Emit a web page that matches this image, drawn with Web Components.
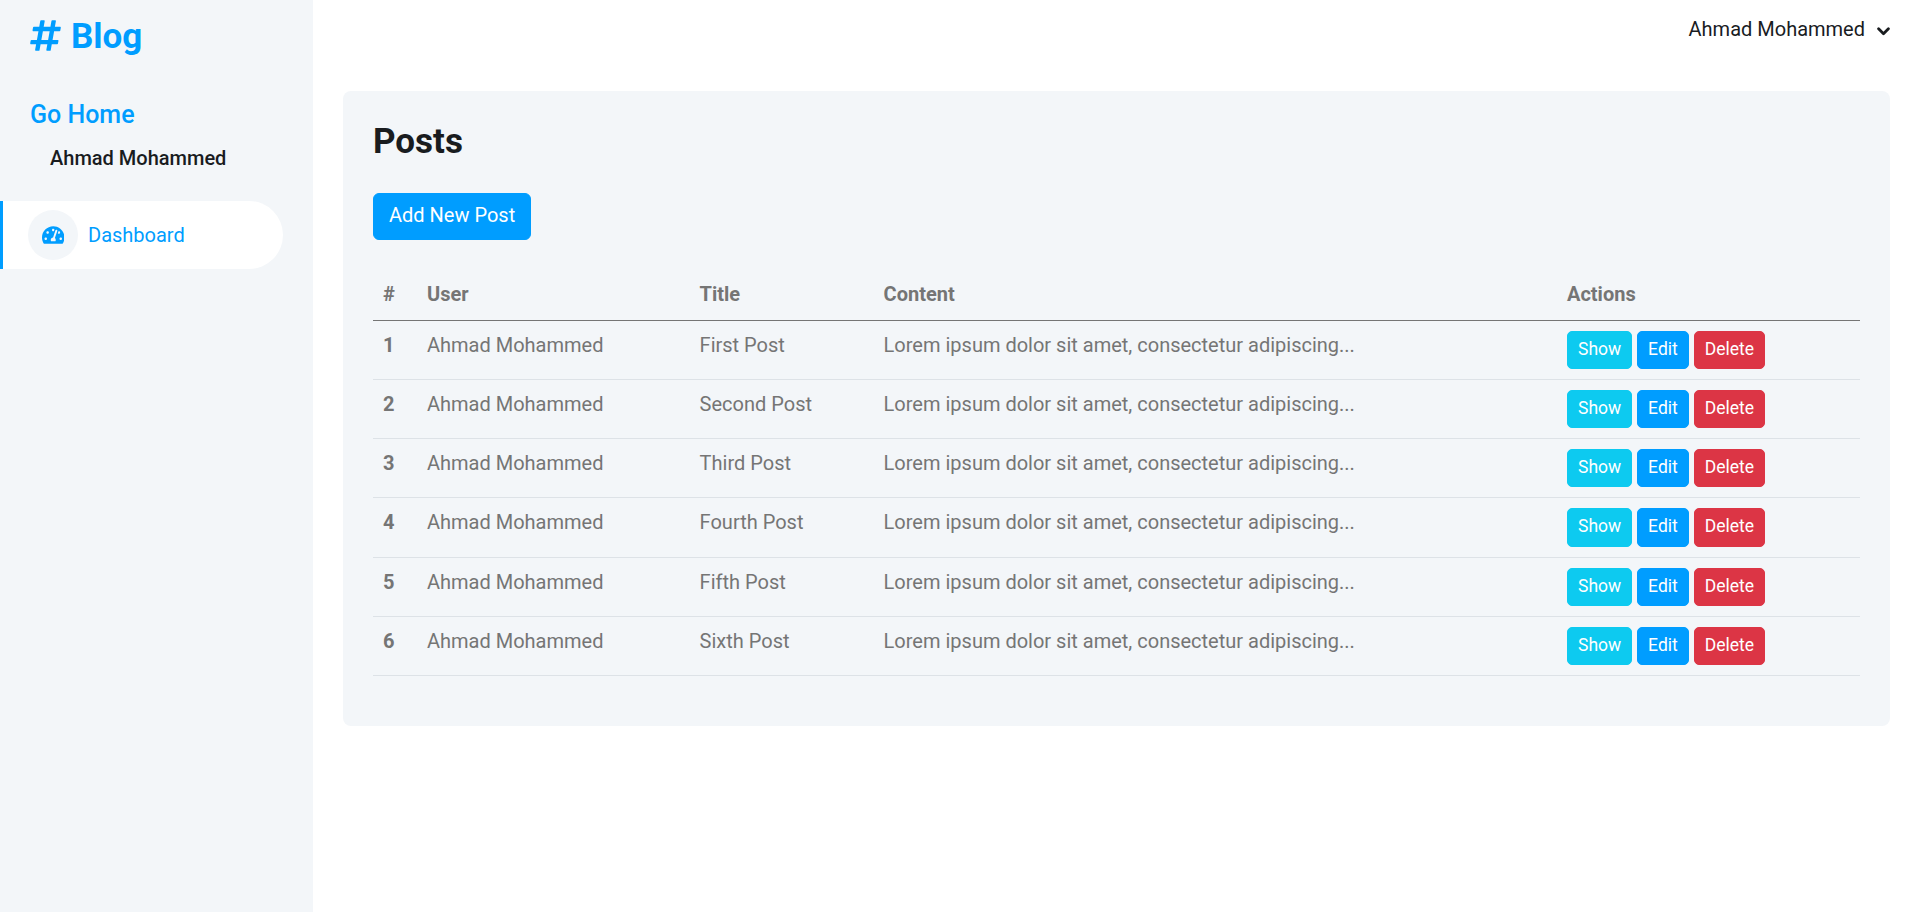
<!DOCTYPE html>
<html lang="en"><head><meta charset="utf-8"><title>Posts</title>
<style>
html,body{margin:0;padding:0;height:100%}
body{font-family:Roboto,sans-serif;font-size:20px;line-height:1.5;color:#191c1f;background:#fff}
</style></head><body>
<blog-app>
  <blog-sidebar slot="side">
    <blog-nav-item label="Dashboard"></blog-nav-item>
  </blog-sidebar>
  <blog-topbar slot="top" name="Ahmad Mohammed"></blog-topbar>
  <blog-card slot="main" heading="Posts">
    <blog-button slot="action" tone="primary" size="lg">Add New Post</blog-button>
    <blog-posts-table></blog-posts-table>
  </blog-card>
</blog-app>
<script>
const el=(name,html,init)=>customElements.define(name,class extends HTMLElement{
  constructor(){super();this.attachShadow({mode:'open'})}
  connectedCallback(){this.shadowRoot.innerHTML=typeof html==='function'?html(this):html;if(init)init(this)}
});
el('blog-app',`<style>
:host{display:grid;grid-template-columns:313px 1fr;min-height:912px}
.s{background:#f3f6f9;min-height:912px}
.m{display:flex;flex-direction:column;min-width:0}
</style><div class="s"><slot name="side"></slot></div><div class="m"><slot name="top"></slot><slot name="main"></slot></div>`);
el('blog-sidebar',`<style>
:host{display:block;padding-top:13px}
.logo{display:flex;align-items:center;gap:10px;margin:0 0 0 30px;font-size:35px;font-weight:700;line-height:48px;color:#009dff;text-decoration:none}
.logo svg{width:31px;height:35px;fill:#009dff;margin-top:-4px}
.home{display:block;margin:36px 0 0 30px;font-size:25px;font-weight:500;line-height:36px;color:#009dff;text-decoration:none}
.who{margin:10px 0 0 50px;font-size:20px;font-weight:500;line-height:30px;color:#191c1f}
.nav{margin-top:28px}
</style><a class="logo" href="#"><svg viewBox="0 0 448 512"><path d="M440.667 182.109l7.143-40c1.313-7.355-4.342-14.109-11.813-14.109h-74.81l14.623-81.891C377.123 38.754 371.468 32 363.997 32h-40.632a12 12 0 0 0-11.813 9.891L296.175 128H197.54l14.623-81.891C213.477 38.754 207.822 32 200.35 32h-40.632a12 12 0 0 0-11.813 9.891L132.528 128H53.432a12 12 0 0 0-11.813 9.891l-7.143 40C33.163 185.246 38.818 192 46.289 192h74.81L98.242 320H19.146a12 12 0 0 0-11.813 9.891l-7.143 40C-1.123 377.246 4.532 384 12.003 384h74.81L72.19 465.891C70.877 473.246 76.532 480 84.003 480h40.632a12 12 0 0 0 11.813-9.891L152.175 384h98.634l-14.623 81.891C234.873 473.246 240.528 480 247.999 480h40.632a12 12 0 0 0 11.813-9.891L315.821 384h79.096a12 12 0 0 0 11.813-9.891l7.143-40c1.313-7.355-4.342-14.109-11.813-14.109h-74.81l22.857-128h79.096a12 12 0 0 0 11.813-9.891zM261.889 320h-98.634l22.857-128h98.634l-22.857 128z"/></svg><span>Blog</span></a><a class="home" href="#">Go Home</a><div class="who">Ahmad Mohammed</div><div class="nav"><slot></slot></div>`);
el('blog-nav-item',h=>`<style>
:host{display:flex;align-items:center;box-sizing:border-box;width:283px;height:68px;background:#fff;border-left:3px solid #009dff;border-radius:0 34px 34px 0;padding-left:25px;gap:10px;color:#009dff;font-size:20px}
.i{width:50px;height:50px;border-radius:50%;background:#f3f6f9;display:flex;align-items:center;justify-content:center}
svg{width:22.5px;height:20px;fill:#009dff}
</style><span class="i"><svg viewBox="0 0 576 512"><path d="M288 32C128.94 32 0 160.94 0 320c0 52.8 14.25 102.26 39.06 144.8 5.61 9.62 16.3 15.2 27.44 15.2h443c11.14 0 21.83-5.58 27.44-15.2C561.75 422.26 576 372.8 576 320c0-159.06-128.94-288-288-288zm0 64c14.71 0 26.58 10.13 30.32 23.65-1.11 2.26-2.64 4.23-3.45 6.67l-9.22 27.67c-5.13 3.49-10.97 6.01-17.64 6.01-17.67 0-32-14.33-32-32S270.33 96 288 96zM96 384c-17.67 0-32-14.33-32-32s14.33-32 32-32 32 14.33 32 32-14.33 32-32 32zm48-160c-17.67 0-32-14.33-32-32s14.33-32 32-32 32 14.33 32 32-14.33 32-32 32zm246.77-72.41l-61.33 184C343.13 347.33 352 364.54 352 384c0 11.72-3.38 22.55-8.88 32H232.88c-5.5-9.45-8.88-20.28-8.88-32 0-33.94 26.5-61.43 59.9-63.59l61.34-184.01c4.17-12.56 17.73-19.45 30.36-15.17 12.57 4.19 19.35 17.79 15.17 30.36zm14.66 57.2l15.52-46.55c3.47-1.29 7.13-2.23 11.05-2.23 17.67 0 32 14.33 32 32s-14.33 32-32 32c-11.38-.01-20.89-6.28-26.57-15.22zM480 384c-17.67 0-32-14.33-32-32s14.33-32 32-32 32 14.33 32 32-14.33 32-32 32z"/></svg></span><span>${h.getAttribute('label')}</span>`);
el('blog-topbar',h=>`<style>
:host{display:flex;justify-content:flex-end;align-items:center;box-sizing:border-box;height:91px;padding:0 30px 33px 0;color:#191c1f;font-size:20px}
svg{width:13px;height:9px;margin-left:12px;margin-top:4px;fill:none;stroke:#191c1f;stroke-width:2.8;stroke-linecap:round;stroke-linejoin:round}
</style><span>${h.getAttribute('name')}</span><svg viewBox="0 0 13 9"><path d="M1.6 1.8 6.5 6.7 11.4 1.8"/></svg>`);
el('blog-card',h=>`<style>
:host{display:block;box-sizing:border-box;margin:0 30px;padding:30px 30px 50px;background:#f3f6f9;border-radius:8px}
h3{margin:0 0 30px;font-size:35px;font-weight:700;line-height:42px;color:#191c1f}
.a{margin-bottom:29.6px;line-height:0}
</style><h3>${h.getAttribute('heading')}</h3><div class="a"><slot name="action"></slot></div><slot></slot>`);
el('blog-button',h=>{const t={primary:'#009dff',info:'#0dcaf0',danger:'#dc3545'}[h.getAttribute('tone')];const lg=h.getAttribute('size')==='lg';return `<style>
:host{display:inline-block;box-sizing:border-box;background:${t};color:#fff;border:1px solid ${t};border-radius:${lg?6:5}px;padding:${lg?'6px 15px 9px':'4px 10px 6px'};font-size:${lg?20:17.5}px;line-height:1.5;white-space:nowrap}
</style><slot></slot>`});
const rows=['First','Second','Third','Fourth','Fifth','Sixth'];
const cols='44px 272.6px 184px 683.4px 303px';
el('blog-post-row',h=>`<style>
:host{display:grid;grid-template-columns:${cols};border-bottom:1px solid #dde2e7;color:#757575;height:58.25px;line-height:30px}
.c{padding:9px 10px 11px;min-width:0}
b{font-weight:700}
.act{display:flex;gap:4.95px;align-items:flex-start;padding-top:10px}
</style><div class="c"><b>${h.getAttribute('n')}</b></div><div class="c">${h.getAttribute('user')}</div><div class="c">${h.getAttribute('title')}</div><div class="c">Lorem ipsum dolor sit amet, consectetur adipiscing...</div><div class="c act"><blog-button tone="info">Show</blog-button><blog-button tone="primary">Edit</blog-button><blog-button tone="danger">Delete</blog-button></div>`);
el('blog-posts-table',`<style>
:host{display:block}
.h{display:grid;grid-template-columns:${cols};border-bottom:1px solid #757575;color:#757575;font-weight:700;line-height:30px}
.h div{padding:9px 10px 11px}
</style><div class="h"><div>#</div><div>User</div><div>Title</div><div>Content</div><div>Actions</div></div>${rows.map((t,i)=>`<blog-post-row n="${i+1}" user="Ahmad Mohammed" title="${t} Post"></blog-post-row>`).join('')}`);
</script>
</body></html>
